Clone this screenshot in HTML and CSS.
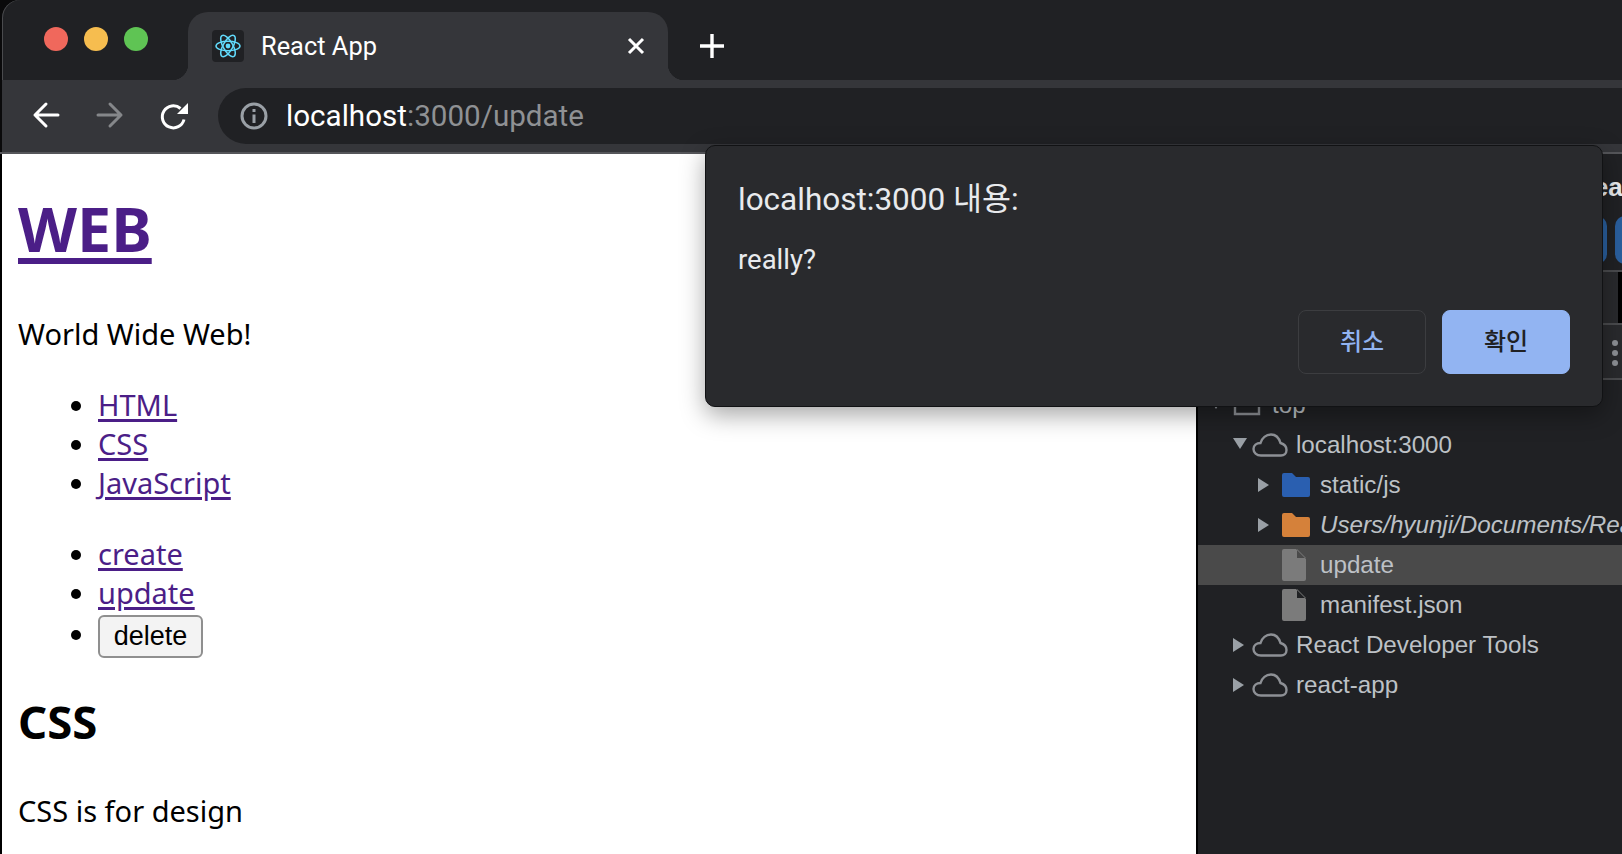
FILE: index.html
```html
<!DOCTYPE html>
<html lang="en">
<head>
    <meta charset="UTF-8">
    <title>React App</title>
    <link rel="stylesheet" href="styles.css">
</head>
<body>
    <div class="window">
        <!-- Tab strip -->
        <div class="tabstrip">
            <div class="lights">
                <span class="light light-red"></span>
                <span class="light light-yellow"></span>
                <span class="light light-green"></span>
            </div>
            <div class="tab">
                <span class="favicon">
                    <svg width="28" height="28" viewBox="0 0 28 28" fill="none" stroke="#61dafb" stroke-width="1.5">
                        <ellipse cx="14" cy="14" rx="12" ry="4.8"/>
                        <ellipse cx="14" cy="14" rx="12" ry="4.8" transform="rotate(60 14 14)"/>
                        <ellipse cx="14" cy="14" rx="12" ry="4.8" transform="rotate(120 14 14)"/>
                        <circle cx="14" cy="14" r="2.4" fill="#61dafb" stroke="none"/>
                    </svg>
                </span>
                <span class="tab-title">React App</span>
                <svg class="tab-close" width="18" height="18" viewBox="0 0 18 18" stroke="#fff" stroke-width="3">
                    <path d="M2 2 16 16M16 2 2 16"/>
                </svg>
            </div>
            <svg class="new-tab" width="26" height="26" viewBox="0 0 26 26" stroke="#fff" stroke-width="3.4">
                <path d="M13 1v24M1 13h24"/>
            </svg>
        </div>

        <!-- Toolbar -->
        <div class="toolbar">
            <svg class="nav-icon" width="32" height="32" viewBox="0 0 32 32" fill="none" stroke="#fff" stroke-width="3" stroke-linecap="round" stroke-linejoin="round">
                <path d="M28 15H5M16 4 5 15l11 11"/>
            </svg>
            <svg class="nav-icon" width="32" height="32" viewBox="0 0 32 32" fill="none" stroke="#85878a" stroke-width="3" stroke-linecap="round" stroke-linejoin="round">
                <path d="M4 15h23M16 4l11 11-11 11"/>
            </svg>
            <svg class="nav-icon" width="32" height="32" viewBox="0 0 32 32" fill="none">
                <path d="M26 19.500A11 11 0 1 1 22.500 8.500" stroke="#fff" stroke-width="3"/>
                <path d="M30 3V14H19z" fill="#fff"/>
            </svg>
            <div class="omnibox">
                <svg width="28" height="28" viewBox="0 0 28 28" fill="none" stroke="#9aa0a6" stroke-width="3">
                    <circle cx="14" cy="14" r="12"/>
                    <path d="M14 12.5V21M14 7v3"/>
                </svg>
                <span class="url"><span class="url-host">localhost</span>:3000/update</span>
            </div>
        </div>

        <div class="main">
            <!-- Rendered page -->
            <div class="page">
                <h1><a href="#">WEB</a></h1>
                <p>World Wide Web!</p>
                <ul class="nav-list">
                    <li><a href="#">HTML</a></li>
                    <li><a href="#">CSS</a></li>
                    <li><a href="#">JavaScript</a></li>
                </ul>
                <ul>
                    <li><a href="#">create</a></li>
                    <li><a href="#">update</a></li>
                    <li><button class="delete-button">delete</button></li>
                </ul>
                <h2>CSS</h2>
                <p>CSS is for design</p>
            </div>

            <!-- Devtools sources panel -->
            <div class="devtools">
                <div class="devtools-head">
                    <div class="head-title">Read</div>
                    <div class="head-buttons">
                        <span class="head-button"></span>
                        <span class="head-button"></span>
                    </div>
                </div>
                <div class="devtools-black"><span class="black-block"></span></div>
                <div class="devtools-tabs">
                    <div class="dots"><span></span><span></span><span></span></div>
                </div>
                <ul class="tree">
                    <li class="row level-0">
                        <span class="arrow arrow-down"></span>
                        <svg width="28" height="24" viewBox="0 0 28 24" fill="none" stroke="#8d9095" stroke-width="2.4">
                            <path d="M2 8V21H26V8M2 8H26V4H2z"/>
                        </svg>
                        <span>top</span>
                    </li>
                    <li class="row level-1">
                        <span class="arrow arrow-down"></span>
                        <svg class="cloud" width="36" height="24" viewBox="0 0 36 24" fill="none" stroke="#8d9095" stroke-width="2.4">
                            <path d="M9 22.5C4.5 22.5 1.5 19.5 1.5 16S4.5 10 8.5 10C10 5 14 1.5 19 1.5S27 5 28.500 10C32 11 34.500 13.500 34.500 17C34.500 20.500 32 22.500 29 22.500z"/>
                        </svg>
                        <span>localhost:3000</span>
                    </li>
                    <li class="row level-2">
                        <span class="arrow arrow-right"></span>
                        <svg width="28" height="24" viewBox="0 0 28 24"><path d="M0 2Q0 0 2 0H10L14 4H26Q28 4 28 6V22Q28 24 26 24H2Q0 24 0 22z" fill="#2a5fb0"/></svg>
                        <span>static/js</span>
                    </li>
                    <li class="row level-2">
                        <span class="arrow arrow-right"></span>
                        <svg width="28" height="24" viewBox="0 0 28 24"><path d="M0 2Q0 0 2 0H10L14 4H26Q28 4 28 6V22Q28 24 26 24H2Q0 24 0 22z" fill="#d5813a"/></svg>
                        <span class="italic">Users/hyunji/Documents/React/react-app</span>
                    </li>
                    <li class="row level-2 row-selected">
                        <span class="arrow"></span>
                        <svg class="file" width="28" height="32" viewBox="0 0 28 32"><path d="M0 2Q0 0 2 0H14L24 10V30Q24 32 22 32H2Q0 32 0 30zM15 0 24 9H15z" fill="#7b7b7b" fill-rule="evenodd"/></svg>
                        <span>update</span>
                    </li>
                    <li class="row level-2">
                        <span class="arrow"></span>
                        <svg class="file" width="28" height="32" viewBox="0 0 28 32"><path d="M0 2Q0 0 2 0H14L24 10V30Q24 32 22 32H2Q0 32 0 30zM15 0 24 9H15z" fill="#7b7b7b" fill-rule="evenodd"/></svg>
                        <span>manifest.json</span>
                    </li>
                    <li class="row level-1">
                        <span class="arrow arrow-right"></span>
                        <svg class="cloud" width="36" height="24" viewBox="0 0 36 24" fill="none" stroke="#8d9095" stroke-width="2.4">
                            <path d="M9 22.5C4.5 22.5 1.5 19.5 1.5 16S4.5 10 8.5 10C10 5 14 1.5 19 1.5S27 5 28.500 10C32 11 34.500 13.500 34.500 17C34.500 20.500 32 22.500 29 22.500z"/>
                        </svg>
                        <span>React Developer Tools</span>
                    </li>
                    <li class="row level-1">
                        <span class="arrow arrow-right"></span>
                        <svg class="cloud" width="36" height="24" viewBox="0 0 36 24" fill="none" stroke="#8d9095" stroke-width="2.4">
                            <path d="M9 22.5C4.5 22.5 1.5 19.5 1.5 16S4.5 10 8.5 10C10 5 14 1.5 19 1.5S27 5 28.500 10C32 11 34.500 13.500 34.500 17C34.500 20.500 32 22.500 29 22.500z"/>
                        </svg>
                        <span>react-app</span>
                    </li>
                </ul>
            </div>
        </div>

        <!-- Confirm dialog -->
        <div class="dialog">
            <div class="dialog-title">localhost:3000 내용:</div>
            <div class="dialog-message">really?</div>
            <div class="dialog-actions">
                <button class="dialog-button">취소</button>
                <button class="dialog-button dialog-button-ok">확인</button>
            </div>
        </div>
    </div>
</body>
</html>
```

FILE: styles.css
```css
body {
    margin: 0;
    padding: 0;
    background-color: #0a0a0b;
    font-family: "Noto Sans", "Noto Sans CJK KR", sans-serif;
}

.window {
    position: relative;
    width: 1622px;
    height: 854px;
    overflow: hidden;
    display: flex;
    flex-direction: column;
}

/* Tab strip */
.tabstrip {
    height: 80px;
    margin-left: 2px;
    box-sizing: border-box;
    padding-top: 12px;
    display: flex;
    align-items: flex-start;
    background-color: #202124;
    border-top-left-radius: 18px;
    box-shadow: inset 1px 0 0 #4a4b4e;
}

.lights {
    width: 186px;
    box-sizing: border-box;
    padding: 15px 0 0 42px;
    display: flex;
    gap: 16px;
}

.light {
    width: 24px;
    height: 24px;
    border-radius: 50%;
}

.light-red {
    background-color: #f0685c;
}

.light-yellow {
    background-color: #f6bd4f;
}

.light-green {
    background-color: #5fc454;
}

.tab {
    position: relative;
    width: 480px;
    height: 68px;
    box-sizing: border-box;
    padding: 18px 23px 0 24px;
    display: flex;
    align-items: flex-start;
    background-color: #35363a;
    border-radius: 20px 20px 0 0;
    color: #fff;
}

.tab::before,
.tab::after {
    content: "";
    position: absolute;
    bottom: 0;
    width: 16px;
    height: 16px;
}

.tab::before {
    left: -16px;
    background: radial-gradient(circle at 0 0, transparent 16px, #35363a 16.5px);
}

.tab::after {
    right: -16px;
    background: radial-gradient(circle at 100% 0, transparent 16px, #35363a 16.5px);
}

.favicon {
    width: 32px;
    height: 32px;
    display: flex;
    align-items: center;
    justify-content: center;
    background-color: #202124;
    border-radius: 4px;
}

.tab-title {
    margin-left: 17px;
    flex: 1;
    font-family: Roboto, sans-serif;
    font-size: 25.4px;
    line-height: 32px;
}

.tab-close {
    margin-top: 7px;
}

.new-tab {
    margin: 21px 0 0 31px;
}

/* Toolbar */
.toolbar {
    height: 72px;
    margin-left: 2px;
    box-sizing: border-box;
    padding: 8px 0 0 28px;
    display: flex;
    align-items: flex-start;
    background-color: #35363a;
}

.nav-icon {
    margin: 12px 32px 0 0;
}

.omnibox {
    flex: 1;
    height: 56px;
    margin-left: -4px;
    padding-left: 22px;
    display: flex;
    align-items: center;
    gap: 18px;
    background-color: #202124;
    border-radius: 28px 0 0 28px;
}

.url {
    font-family: Roboto, sans-serif;
    font-size: 29.6px;
    color: #8f9194;
}

.url-host {
    color: #fff;
}

.main {
    flex: 1;
    display: flex;
    min-height: 0;
    border-top: 2px solid #55565a;
}

/* Rendered page */
.page {
    width: 1196px;
    box-sizing: border-box;
    padding-left: 16px;
    border-left: 2px solid #000;
    background-color: #fff;
    color: #000;
    overflow: hidden;
}

.page a {
    color: #4b1e87;
    text-decoration-thickness: 3px;
    text-underline-offset: 3px;
}

.page h1 {
    margin: 35px 0 0;
    font-size: 61px;
    line-height: 80px;
    font-weight: 700;
}

.page h1 a {
    text-decoration-thickness: 6px;
    text-underline-offset: 6px;
}

.page p {
    margin: 45px 0 0;
    font-size: 29px;
    line-height: 40px;
}

.page ul {
    margin: 32px 0 0;
    padding-left: 80px;
    font-size: 29px;
    line-height: 39px;
}

.page .nav-list {
    margin-top: 31px;
}

.page h2 {
    margin: 31px 0 0;
    font-size: 45.500px;
    line-height: 64px;
    font-weight: 700;
}

.page h2 + p {
    margin-top: 38px;
}

.delete-button {
    width: 105px;
    height: 43px;
    margin-top: 3px;
    padding: 0;
    border: 2px solid #8f8f8f;
    border-radius: 6px;
    background-color: #f3f3f3;
    font-family: "Liberation Sans", sans-serif;
    font-size: 27px;
    color: #000;
}

/* Devtools sources panel */
.devtools {
    flex: 1;
    min-width: 0;
    border-left: 2px solid #000;
    background-color: #202124;
    color: #bdc1c6;
    font-family: "Liberation Sans", sans-serif;
    font-size: 24.2px;
    overflow: hidden;
}

.devtools-head {
    height: 118px;
    box-sizing: border-box;
    padding-top: 18px;
    border-bottom: 2px solid #4a4b4e;
}

.head-title {
    margin-left: 377px;
    font-size: 26px;
    line-height: 30px;
    font-weight: 700;
    color: #e8eaed;
    white-space: nowrap;
}

.head-buttons {
    margin-left: 311px;
    margin-top: 14px;
    display: flex;
    gap: 8px;
}

.head-button {
    flex: none;
    width: 98px;
    height: 48px;
    border-radius: 10px;
    background-color: #2a5f9e;
}

.devtools-black {
    height: 53px;
    box-sizing: border-box;
    display: flex;
    border-bottom: 2px solid #4a4b4e;
    background-color: #292a2d;
}

.black-block {
    margin-left: 420px;
    width: 10px;
    background-color: #000;
}

.devtools-tabs {
    height: 55px;
    box-sizing: border-box;
    border-bottom: 2px solid #4a4b4e;
    background-color: #292a2d;
    padding: 15px 0 0 414px;
}

.dots {
    display: flex;
    flex-direction: column;
    gap: 4px;
}

.dots span {
    width: 6px;
    height: 6px;
    border-radius: 50%;
    background-color: #8d9095;
}

.tree {
    margin: 5px 0 0;
    padding: 0;
    list-style: none;
}

.row {
    height: 40px;
    display: flex;
    align-items: center;
    white-space: nowrap;
}

.row svg {
    flex: none;
    margin-right: 10px;
}

.level-0 {
    padding-left: 11px;
}

.level-1 {
    padding-left: 35px;
}

.level-2 {
    padding-left: 60px;
}

.level-1 .arrow {
    margin-right: 5px;
}

.level-1 svg {
    margin-right: 8px;
}

.level-2 .arrow {
    margin-right: 10px;
}

.level-0 svg {
    margin-left: 2px;
    margin-right: 11px;
}

.row-selected {
    background-color: #4a4a4a;
}

.italic {
    font-style: italic;
}

.arrow {
    flex: none;
    width: 14px;
    height: 14px;
    margin-right: 8px;
    display: block;
}

.arrow-right {
    border-left: 11px solid #9aa0a6;
    border-top: 7px solid transparent;
    border-bottom: 7px solid transparent;
    box-sizing: border-box;
}

.arrow-down {
    border-top: 11px solid #9aa0a6;
    border-left: 7px solid transparent;
    border-right: 7px solid transparent;
    box-sizing: border-box;
}

/* Confirm dialog */
.dialog {
    position: absolute;
    left: 705px;
    top: 145px;
    width: 898px;
    height: 262px;
    box-sizing: border-box;
    padding: 36px 32px 0;
    display: flex;
    flex-direction: column;
    background-color: #292a2d;
    border: 1px solid #111214;
    border-radius: 10px;
    box-shadow: 0 8px 24px rgba(0, 0, 0, 0.35);
    font-family: Roboto, "Noto Sans CJK KR", sans-serif;
    color: #e8eaed;
}

.dialog-title {
    font-size: 31.5px;
    line-height: 36px;
}

.dialog-message {
    margin-top: 26px;
    font-size: 27.500px;
    line-height: 32px;
}

.dialog-actions {
    margin-top: 34px;
    display: flex;
    justify-content: flex-end;
    gap: 16px;
}

.dialog-button {
    width: 128px;
    height: 64px;
    padding: 0 0 6px;
    border: 1px solid #3c3d40;
    border-radius: 8px;
    background-color: #292a2d;
    font-family: Roboto, "Noto Sans CJK KR", sans-serif;
    font-size: 24px;
    font-weight: 500;
    color: #92b4f2;
}

.dialog-button-ok {
    border-color: #92b4f2;
    background-color: #92b4f2;
    color: #202124;
}
```
